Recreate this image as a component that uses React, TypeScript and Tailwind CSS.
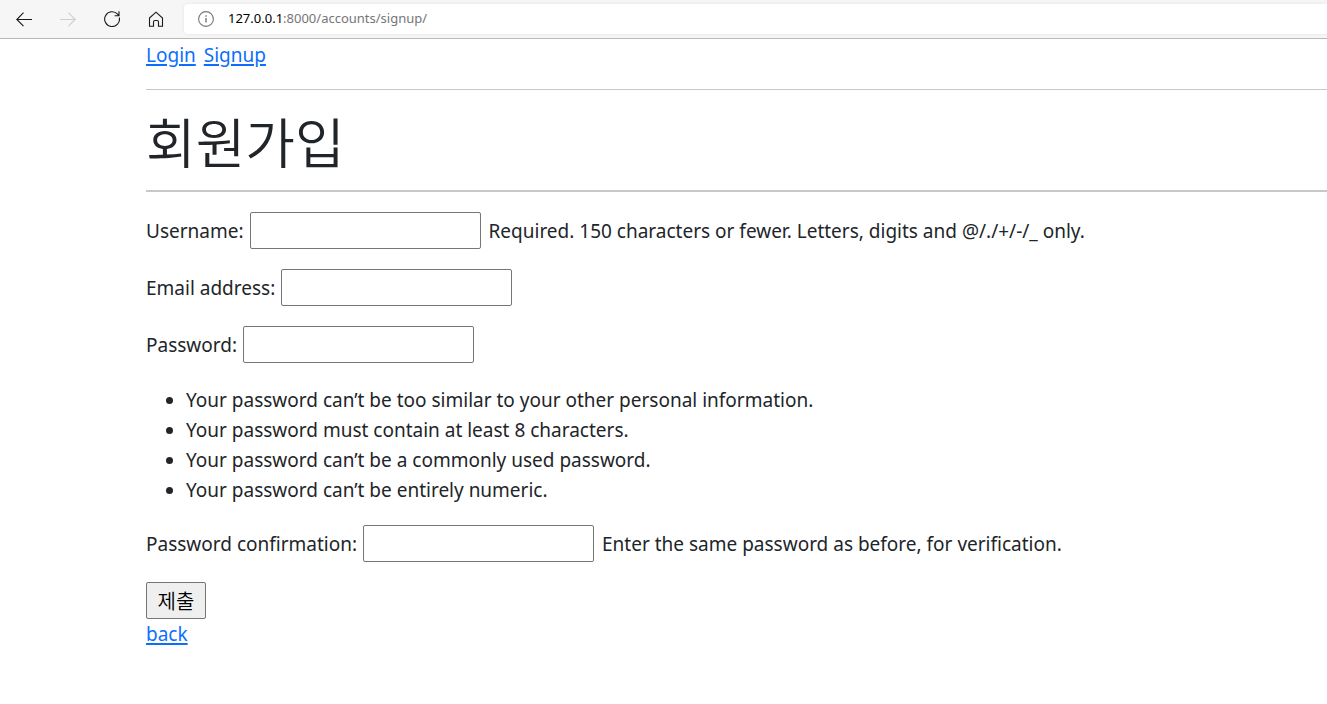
import type { ReactNode } from 'react';

const passwordRules = [
  'Your password can’t be too similar to your other personal information.',
  'Your password must contain at least 8 characters.',
  'Your password can’t be a commonly used password.',
  'Your password can’t be entirely numeric.',
];

const linkClass = 'text-[#0d6efd] underline decoration-2 underline-offset-2';

function Icon({ children, className = '' }: { children: ReactNode; className?: string }) {
  return (
    <svg
      viewBox="0 0 16 16"
      className={`size-4 ${className}`}
      fill="none"
      stroke="currentColor"
      strokeWidth="1.1"
      aria-hidden="true"
    >
      {children}
    </svg>
  );
}

function BrowserBar() {
  return (
    <header className="flex h-[39px] items-center border-b border-[#b8b8b8] bg-[#f6f6f6] pl-4 text-[#1a1a1a]">
      <nav aria-label="Browser" className="flex gap-7">
        <button type="button" aria-label="Back">
          <Icon>
            <path d="M16 8.500H.8M7.500 1.700.8 8.500l6.700 6.700" />
          </Icon>
        </button>
        <button type="button" aria-label="Forward" disabled>
          <Icon className="text-[#cfcfcf]">
            <path d="M0 8.500h15.200M8.500 1.700l6.700 6.800-6.700 6.700" />
          </Icon>
        </button>
        <button type="button" aria-label="Refresh">
          <Icon>
            <path d="M15.300 6.500A7.400 7.400 0 1 1 13.600 3.200L14.900 4.600M15 .3v4.400h-4.400" />
          </Icon>
        </button>
        <button type="button" aria-label="Home">
          <Icon>
            <path d="M1.500 7 8 1.200 14.500 7v8.300h-4V11A1.500 1.500 0 0 0 9 9.500H7A1.500 1.500 0 0 0 5.500 11v4.300h-4z" />
          </Icon>
        </button>
      </nav>
      <div className="ml-5 flex h-[30px] flex-1 items-center gap-3.5 rounded-l bg-white pl-3.5 shadow-[0_0_3px_#e2e2e2]">
        <Icon className="text-[#767676]">
          <circle cx="8" cy="8" r="7.400" />
          <path d="M8 7v4.500M8 4.200v1.500" strokeWidth="1.400" />
        </Icon>
        <p className="text-[13px] text-[#767676]">
          <span className="text-black">127.0.0.1</span>:8000/accounts/signup/
        </p>
      </div>
    </header>
  );
}

function Field({ id, label, type, help }: { id: string; label: string; type: string; help?: string }) {
  return (
    <div className="flex items-center gap-2">
      <div className="flex items-center gap-1.5">
        <label htmlFor={id}>{label}</label>
        <input
          id={id}
          type={type}
          aria-describedby={help ? `${id}-help` : undefined}
          className="h-[37px] w-[231px] rounded-xs border border-[#767676] bg-white px-1 text-black"
        />
      </div>
      {help && <span id={`${id}-help`}>{help}</span>}
    </div>
  );
}

export default function App() {
  return (
    <div className="min-h-screen bg-white font-['Noto_Sans','Noto_Sans_CJK_KR',sans-serif] text-[#212529]">
      <BrowserBar />
      <main className="ml-[146px] pt-px text-[19px] leading-[30px]">
        <nav aria-label="Account" className="flex gap-2">
          <a href="#login" className={linkClass}>Login</a>
          <a href="#signup" className={linkClass}>Signup</a>
        </nav>
        <hr className="mt-[19px] mb-5 border-t border-[#c8c8c8]" />
        <h1 className="pt-0.5 font-['Noto_Sans_CJK_KR',sans-serif] text-[54px] leading-[58px] font-[350]">회원가입</h1>
        <hr className="my-5 border-t-2 border-[#c8c8c8]" />
        <form className="flex flex-col items-start gap-5" onSubmit={(e) => e.preventDefault()}>
          <Field id="username" label="Username:" type="text" help="Required. 150 characters or fewer. Letters, digits and @/./+/-/_ only." />
          <Field id="email" label="Email address:" type="email" />
          <Field id="password1" label="Password:" type="password" />
          <ul className="list-disc pt-0.5 pl-10">
            {passwordRules.map((rule) => (
              <li key={rule}>{rule}</li>
            ))}
          </ul>
          <Field id="password2" label="Password confirmation:" type="password" help="Enter the same password as before, for verification." />
          <button type="submit" className="h-[37px] w-[60px] rounded-xs border border-[#767676] bg-[#efefef] font-['Noto_Sans_CJK_KR',sans-serif] text-xl font-[350] text-black">
            제출
          </button>
        </form>
        <a href="#back" className={linkClass}>back</a>
      </main>
    </div>
  );
}
